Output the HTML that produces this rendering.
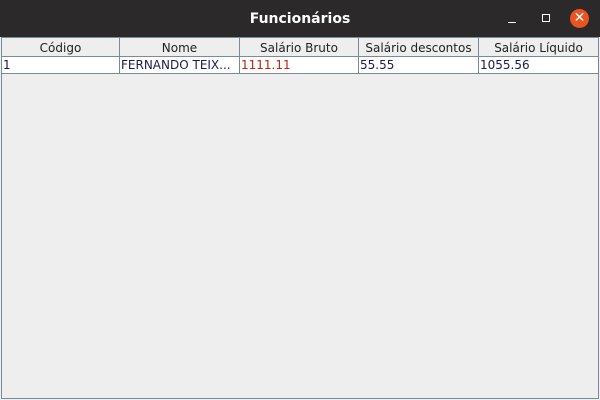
<!DOCTYPE html>
<html><head><style>
body{margin:0;width:600px;height:400px;overflow:hidden;background:#2b2929;font-family:"DejaVu Sans","Liberation Sans",sans-serif;}
.tb{position:absolute;left:0;top:0;width:600px;height:37px;background:#2b2929;border-radius:8px 8px 0 0;}
.title{position:absolute;left:0;width:600px;top:11px;text-align:center;color:#fff;font-weight:bold;font-size:14px;}
.body{position:absolute;left:0;top:37px;width:600px;height:363px;background:#eeeeee;}
.frame{position:absolute;left:1px;top:0;width:596px;height:361px;border-left:1px solid #7a8a99;border-right:1px solid #7a8a99;border-bottom:1px solid #7a8a99;}
.c{position:absolute;font-size:12px;height:18px;line-height:18px;box-sizing:border-box;white-space:nowrap;}
.h{top:0;background:#eeeeee;text-align:center;color:#222;border-right:1px solid #7a8a99;border-bottom:1px solid #7a8a99;border-top:1px solid #7a8a99;height:20px;line-height:19px;padding-top:1px;}
.d{top:20px;background:#fff;color:#1a1a55;border-right:1px solid #7a8a99;border-bottom:1px solid #7a8a99;padding-left:1px;height:17px;line-height:17px;}
</style></head><body>
<div class="tb"><div class="title">Funcionários</div>
<div style="position:absolute;left:508px;top:22px;width:8px;height:1px;background:#fff"></div>
<div style="position:absolute;left:542px;top:14px;width:6px;height:6px;border:1.5px solid #fff"></div>
<div style="position:absolute;left:570px;top:9px;width:19px;height:19px;border-radius:50%;background:#e95420;color:#fff;font-size:14px;line-height:19px;text-align:center">✕</div>
</div>
<div class="body"><div class="frame">
<div class="c h" style="left:0;width:118px">Código</div>
<div class="c h" style="left:118px;width:120px">Nome</div>
<div class="c h" style="left:238px;width:119px">Salário Bruto</div>
<div class="c h" style="left:357px;width:120px">Salário descontos</div>
<div class="c h" style="left:477px;width:119px;border-right:none">Salário Líquido</div>
<div class="c d" style="left:0;width:118px">1</div>
<div class="c d" style="left:118px;width:120px">FERNANDO TEIX...</div>
<div class="c d" style="left:238px;width:119px;color:#c0220a">1111.11</div>
<div class="c d" style="left:357px;width:120px">55.55</div>
<div class="c d" style="left:477px;width:119px;border-right:none">1055.56</div>
</div></div>
</body></html>
